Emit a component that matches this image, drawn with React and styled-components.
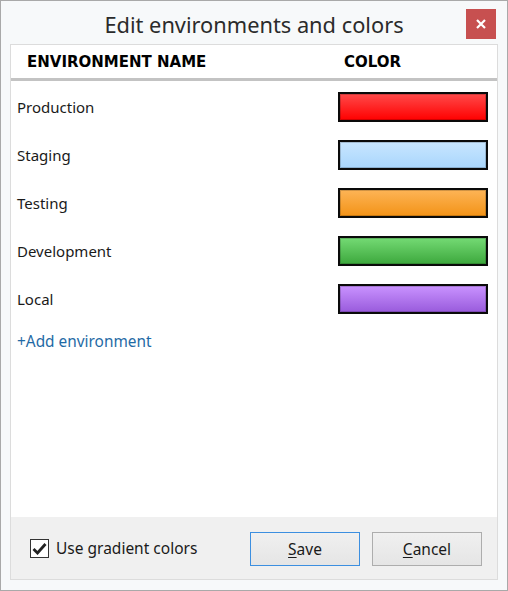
import React from "react";
import styled, { createGlobalStyle } from "styled-components";

const Global = createGlobalStyle`
  html, body { margin: 0; padding: 0; background: #f7f9fa; }
  body { font-family: "Noto Sans", "Open Sans", sans-serif; }
  * { box-sizing: border-box; }
`;

const Window = styled.div`
  width: 508px;
  height: 591px;
  border: 1px solid #a9a9a9;
  background: #f7f9fa;
  display: flex;
  flex-direction: column;
`;

const TitleBar = styled.div`
  height: 43px;
  display: flex;
  align-items: center;
  justify-content: center;
  position: relative;
`;

const Title = styled.div`
  font-size: 21.8px;
  color: #2b2b2b;
  margin-top: 3px;
`;

const Close = styled.button`
  position: absolute;
  right: 11px;
  top: 8px;
  width: 30px;
  height: 30px;
  border: none;
  background: #c75050;
  color: #fff;
  display: flex;
  align-items: center;
  justify-content: center;
  padding: 0;
`;

const Panel = styled.div`
  margin: 0 9px 10px 9px;
  flex: 1;
  border: 1px solid #dcdcdc;
  background: #fff;
  display: flex;
  flex-direction: column;
`;

const Header = styled.div`
  height: 36px;
  display: flex;
  align-items: center;
  border-bottom: 3px solid #c3c3c3;
  font-family: "DejaVu Sans", Verdana, sans-serif;
  font-weight: bold;
  font-size: 15px;
  color: #000;
`;

const HeadName = styled.div`
  padding-left: 16px;
  width: 333px;
`;

const HeadColor = styled.div``;

const Rows = styled.div`
  padding-top: 2px;
  display: flex;
  flex-direction: column;
  flex: 1;
`;

const Row = styled.div`
  height: 48px;
  display: flex;
  align-items: center;
  justify-content: space-between;
  padding: 0 9px 0 6px;
  font-size: 15px;
  color: #1a1a1a;
`;

const Swatch = styled.div`
  width: 150px;
  height: 30px;
  border: 2px solid #0a0a0a;
  background: linear-gradient(${(p) => p.$top}, ${(p) => p.$bottom});
  box-shadow: inset 0 0 0 1px rgba(0, 0, 0, 0.18);
`;

const AddLink = styled.a`
  display: block;
  margin: 9px 0 0 6px;
  font-size: 15.4px;
  color: #1f6aa5;
  text-decoration: none;
  line-height: 20px;
`;

const Footer = styled.div`
  height: 62px;
  background: #f0f0f0;
  display: flex;
  align-items: center;
  padding: 0 15px 0 19px;
`;

const CheckLabel = styled.label`
  display: flex;
  align-items: center;
  gap: 7px;
  font-size: 15.5px;
  color: #1a1a1a;
  flex: 1;
`;

const Box = styled.span`
  width: 19px;
  height: 19px;
  border: 1px solid #333;
  background: #fff;
  display: flex;
  align-items: center;
  justify-content: center;
`;

const Buttons = styled.div`
  display: flex;
  gap: 12px;
  margin-top: 2px;
`;

const Button = styled.button`
  width: 110px;
  height: 34px;
  font-family: inherit;
  font-size: 15.5px;
  color: #1a1a1a;
  background: linear-gradient(#f0f0f0, #e5e5e5);
  border: 1px solid ${(p) => (p.$primary ? "#3c8fe0" : "#adadad")};
  padding: 0;
  & u { text-underline-offset: 2px; }
`;

const envs = [
  { name: "Production", top: "#ff4a4a", bottom: "#ff0000" },
  { name: "Staging", top: "#c8e6ff", bottom: "#a9d6fc" },
  { name: "Testing", top: "#fdb456", bottom: "#f39317" },
  { name: "Development", top: "#74da74", bottom: "#3da83d" },
  { name: "Local", top: "#c992ff", bottom: "#995bdc" },
];

export default function App() {
  return (
    <>
      <Global />
      <Window>
        <TitleBar>
          <Title>Edit environments and colors</Title>
          <Close aria-label="Close">
            <svg width="12" height="12" viewBox="0 0 12 12">
              <path d="M2 2 L10 10 M10 2 L2 10" stroke="#fff" strokeWidth="2.2" />
            </svg>
          </Close>
        </TitleBar>
        <Panel>
          <Header>
            <HeadName>ENVIRONMENT NAME</HeadName>
            <HeadColor>COLOR</HeadColor>
          </Header>
          <Rows>
            {envs.map((e) => (
              <Row key={e.name}>
                <span>{e.name}</span>
                <Swatch $top={e.top} $bottom={e.bottom} />
              </Row>
            ))}
            <AddLink href="#">+Add environment</AddLink>
          </Rows>
          <Footer>
            <CheckLabel>
              <Box>
                <svg width="15" height="13" viewBox="0 0 15 13">
                  <path d="M1.5 7 L5.5 11 L13.5 2" fill="none" stroke="#222" strokeWidth="2.8" />
                </svg>
              </Box>
              Use gradient colors
            </CheckLabel>
            <Buttons>
              <Button $primary>
                <u>S</u>ave
              </Button>
              <Button>
                <u>C</u>ancel
              </Button>
            </Buttons>
          </Footer>
        </Panel>
      </Window>
    </>
  );
}
